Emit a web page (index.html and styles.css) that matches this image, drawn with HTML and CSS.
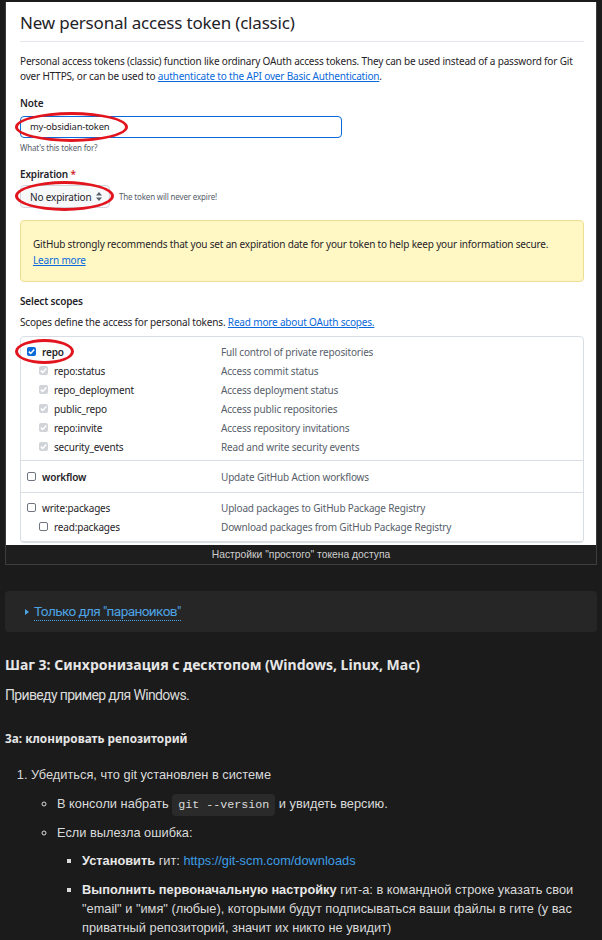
FILE: index.html
```html
<!DOCTYPE html>
<html lang="ru">
<head>
<meta charset="utf-8">
<title>Token</title>
<link rel="stylesheet" href="styles.css">
</head>
<body>
<figure class="fig">
  <div class="shot">
    <h1 class="gh-title">New personal access token (classic)</h1>
    <p class="gh-desc">Personal access tokens (classic) function like ordinary OAuth access tokens. They can be used instead of a password for Git over HTTPS, or can be used to <a class="gh-link">authenticate to the API over Basic Authentication</a>.</p>
    <div class="gh-label">Note</div>
    <div class="gh-input">my-obsidian-token</div>
    <div class="gh-hint">What's this token for?</div>
    <div class="gh-label gh-label-exp">Expiration <span class="req">*</span></div>
    <div class="gh-exp-row">
      <div class="gh-select">No expiration
        <svg class="sel-arrows" width="6" height="9" viewBox="0 0 6 9"><path d="M3 0 L6 3.5 H0 Z M3 9 L0 5.5 H6 Z" fill="#57606a"/></svg>
      </div>
      <span class="gh-note">The token will never expire!</span>
    </div>
    <div class="gh-flash">
      <div>GitHub strongly recommends that you set an expiration date for your token to help keep your information secure.</div>
      <a class="gh-link">Learn more</a>
    </div>
    <div class="gh-label gh-label-scopes">Select scopes</div>
    <div class="gh-scopes-desc">Scopes define the access for personal tokens. <a class="gh-link">Read more about OAuth scopes.</a></div>
    <div class="scopes">
      <div class="scope-group">
        <div class="scope-row"><span class="cb cb-on"><svg width="9" height="9" viewBox="0 0 9 9"><path d="M1.8 4.6 L3.7 6.4 L7.3 2.6" stroke="#fff" stroke-width="1.5" fill="none"/></svg></span><b class="scope-name">repo</b><span class="scope-desc">Full control of private repositories</span></div>
        <div class="scope-row sub"><span class="cb cb-dis"><svg width="9" height="9" viewBox="0 0 9 9"><path d="M1.8 4.6 L3.7 6.4 L7.3 2.6" stroke="#fff" stroke-width="1.5" fill="none"/></svg></span><span class="scope-name">repo:status</span><span class="scope-desc">Access commit status</span></div>
        <div class="scope-row sub"><span class="cb cb-dis"><svg width="9" height="9" viewBox="0 0 9 9"><path d="M1.8 4.6 L3.7 6.4 L7.3 2.6" stroke="#fff" stroke-width="1.5" fill="none"/></svg></span><span class="scope-name">repo_deployment</span><span class="scope-desc">Access deployment status</span></div>
        <div class="scope-row sub"><span class="cb cb-dis"><svg width="9" height="9" viewBox="0 0 9 9"><path d="M1.8 4.6 L3.7 6.4 L7.3 2.6" stroke="#fff" stroke-width="1.5" fill="none"/></svg></span><span class="scope-name">public_repo</span><span class="scope-desc">Access public repositories</span></div>
        <div class="scope-row sub"><span class="cb cb-dis"><svg width="9" height="9" viewBox="0 0 9 9"><path d="M1.8 4.6 L3.7 6.4 L7.3 2.6" stroke="#fff" stroke-width="1.5" fill="none"/></svg></span><span class="scope-name">repo:invite</span><span class="scope-desc">Access repository invitations</span></div>
        <div class="scope-row sub"><span class="cb cb-dis"><svg width="9" height="9" viewBox="0 0 9 9"><path d="M1.8 4.6 L3.7 6.4 L7.3 2.6" stroke="#fff" stroke-width="1.5" fill="none"/></svg></span><span class="scope-name">security_events</span><span class="scope-desc">Read and write security events</span></div>
      </div>
      <div class="scope-group single">
        <div class="scope-row"><span class="cb cb-off"></span><b class="scope-name">workflow</b><span class="scope-desc">Update GitHub Action workflows</span></div>
      </div>
      <div class="scope-group">
        <div class="scope-row"><span class="cb cb-off"></span><span class="scope-name">write:packages</span><span class="scope-desc">Upload packages to GitHub Package Registry</span></div>
        <div class="scope-row sub"><span class="cb cb-off"></span><span class="scope-name">read:packages</span><span class="scope-desc">Download packages from GitHub Package Registry</span></div>
      </div>
    </div>
    <span class="mark mark-note"></span>
    <span class="mark mark-exp"></span>
    <span class="mark mark-repo"></span>
  </div>
  <figcaption class="caption">Настройки "простого" токена доступа</figcaption>
</figure>

<details class="spoiler">
  <summary><span class="spoiler-title">Только для "параноиков"</span></summary>
</details>

<h3 class="step">Шаг 3: Синхронизация с десктопом (Windows, Linux, Mac)</h3>
<p class="para">Приведу пример для Windows.</p>
<h4 class="sub-step">3a: клонировать репозиторий</h4>

<ol class="steps">
  <li>Убедиться, что git установлен в системе
    <ul class="circle-list">
      <li>В консоли набрать <code class="code">git --version</code> и увидеть версию.</li>
      <li>Если вылезла ошибка:
        <ul class="square-list">
          <li><b>Установить</b> гит: <a class="link">https://git-scm.com/downloads</a></li>
          <li><b>Выполнить первоначальную настройку</b> гит-а: в командной строке указать свои "email" и "имя" (любые), которыми будут подписываться ваши файлы в гите (у вас приватный репозиторий, значит их никто не увидит)</li>
        </ul>
      </li>
    </ul>
  </li>
</ol>
</body>
</html>
```

FILE: styles.css
```css
* { box-sizing: border-box; }
html, body { margin: 0; padding: 0; }
body {
  background: #1b1b1b;
  color: #dadada;
  font-family: "Liberation Sans", Arial, sans-serif;
  width: 602px;
  height: 940px;
  overflow: hidden;
}

/* ---------- figure with screenshot ---------- */
.fig {
  margin: 2px 5px 0 5px;
  border: 1px solid #3d3d3d;
  border-top: none;
  width: 592px;
  background: #1e1e1e;
}
.shot {
  position: relative;
  background: #fff;
  height: 543px;
  margin-top: 1px;
  padding: 0 12px 0 14px;
  overflow: hidden;
  font-family: "Noto Sans", sans-serif;
  color: #1f2328;
  font-size: 10px;
  letter-spacing: -0.17px;
}
.gh-title {
  margin: 0;
  padding-top: 8px;
  font-size: 17px;
  letter-spacing: -0.2px;
  font-weight: 400;
  line-height: 26px;
  height: 40px;
  border-bottom: 1px solid #e3e6ea;
  color: #1f2328;
}
.gh-desc {
  margin: 12px 0 0;
  line-height: 15px;
  font-size: 10px;
  color: #1f2328;
}
.gh-link {
  color: #0969da;
  text-decoration: underline;
  text-decoration-color: #0969da;
}
.gh-label {
  margin-top: 12px;
  line-height: 14px;
  font-weight: 600;
  font-size: 10px;
}
.gh-input {
  margin-top: 6px;
  width: 322px;
  height: 22px;
  border: 1px solid #0969da;
  border-radius: 4px;
  padding-left: 9px;
  line-height: 20px;
  font-size: 9.4px;
}
.gh-hint {
  margin-top: 4px;
  font-size: 8px;
  line-height: 12px;
  color: #57606a;
}
.gh-label-exp { margin-top: 13px; }
.req { color: #cf222e; }
.gh-exp-row {
  margin-top: 4px;
  display: flex;
  align-items: center;
  gap: 9px;
}
.gh-select {
  width: 90px;
  height: 23px;
  border: 1px solid #d0d7de;
  background: #f6f8fa;
  border-radius: 4px;
  display: flex;
  align-items: center;
  justify-content: space-between;
  padding: 0 7px 0 9px;
  font-size: 10px;
}
.gh-note { font-size: 8px; color: #57606a; }
.gh-flash {
  margin-top: 12px;
  height: 62px;
  background: #fff8c5;
  border: 1px solid #eedd94;
  border-radius: 4px;
  padding: 15px 12px 0;
  line-height: 16px;
  font-size: 10px;
}
.gh-label-scopes { margin-top: 12px; }
.gh-scopes-desc { margin-top: 7px; line-height: 14px; font-size: 10px; }
.scopes {
  margin-top: 7px;
  border: 1px solid #d8dee4;
  border-radius: 4px;
  font-size: 10px;
}
.scope-group { padding: 5px 0 4px; border-bottom: 1px solid #d8dee4; }
.scope-group.single { padding: 6px 0; }
.scope-group:last-child { padding: 5px 0 5px; }
.scope-row {
  display: flex;
  align-items: center;
  height: 19px;
  padding-left: 6px;
}
.scope-row.sub { padding-left: 18px; }
.cb {
  width: 9px;
  height: 9px;
  border-radius: 2px;
  margin-right: 6px;
  flex: none;
  display: flex;
}
.cb-on { background: #0969da; }
.cb-dis { background: #d0d4d8; }
.cb-off { border: 1px solid #6e7781; background: #fff; }
.scope-name { width: 179px; flex: none; color: #1f2328; }
.scope-row.sub .scope-name { width: 167px; }
b.scope-name { font-weight: 600; }
.scope-desc { color: #57606a; }

.mark {
  position: absolute;
  border: 3px solid #e2141e;
  border-radius: 50%;
}
.mark-note { left: 9px; top: 110px; width: 113px; height: 30px; }
.mark-exp { left: 9px; top: 179px; width: 99px; height: 30px; }
.mark-repo { left: 9px; top: 337px; width: 59px; height: 25px; }

.caption {
  height: 19px;
  line-height: 19px;
  text-align: center;
  font-family: "Liberation Sans", Arial, sans-serif;
  font-size: 10.3px;
  color: #cfcfcf;
}

/* ---------- spoiler ---------- */
.spoiler {
  margin: 26px 5px 0;
  background: #262626;
  border-radius: 4px;
  height: 41px;
}
.spoiler summary {
  list-style: none;
  padding: 12px 0 0 20px;
  font-family: Roboto, sans-serif;
  font-size: 13.6px;
  letter-spacing: -0.6px;
  line-height: 18px;
  color: #4da3e4;
  display: flex;
  align-items: center;
}
.spoiler summary::-webkit-details-marker { display: none; }
.spoiler summary::before {
  content: "";
  border-left: 4px solid #4da3e4;
  border-top: 3px solid transparent;
  border-bottom: 3px solid transparent;
  margin-right: 5px;
}
.spoiler-title {
  border-bottom: 1px dotted #4da3e4;
  line-height: 17px;
}

/* ---------- text ---------- */
.step {
  margin: 23px 5px 0;
  font-family: "Noto Sans", sans-serif;
  font-weight: 700;
  font-size: 14px;
  line-height: 20px;
  color: #e6e6e6;
}
.para {
  margin: 10px 5px 0;
  font-family: Roboto, sans-serif;
  font-size: 14px;
  letter-spacing: -0.65px;
  line-height: 20px;
  color: #dadada;
}
.sub-step {
  margin: 23px 5px 0;
  font-family: "Noto Sans", sans-serif;
  font-weight: 700;
  font-size: 11.8px;
  line-height: 20px;
  color: #e6e6e6;
}
.steps {
  margin: 17px 0 0;
  padding-left: 31px;
  font-size: 12.8px;
  line-height: 19px;
  color: #dadada;
}
.steps li { margin: 0; }
.circle-list {
  list-style: circle;
  margin: 10px 0 0;
  padding-left: 26px;
}
.circle-list > li { margin-bottom: 10px; }
.square-list {
  list-style: square;
  margin: 9px 0 0;
  padding-left: 25px;
}
.square-list > li { margin-bottom: 10px; }
.code {
  font-family: "Liberation Mono", monospace;
  font-size: 11.7px;
  line-height: 1;
  background: #2a2a2a;
  border-radius: 4px;
  padding: 4px 6px;
}
.link { color: #3d9de6; }
b { font-weight: 700; color: #e8e8e8; }
```
